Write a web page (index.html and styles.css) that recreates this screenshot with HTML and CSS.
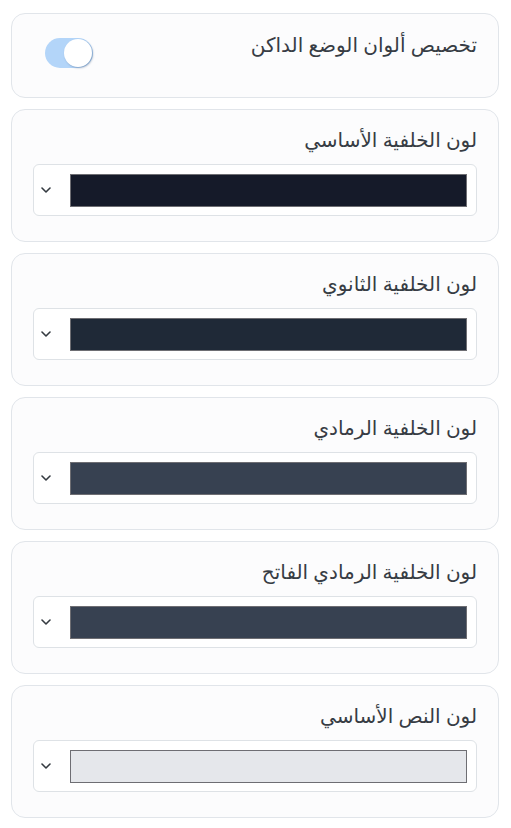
FILE: index.html
```html
<!DOCTYPE html>
<html lang="ar" dir="rtl">
<head>
<meta charset="utf-8">
<link rel="stylesheet" href="styles.css">
</head>
<body>
<div class="list">
  <div class="card card-toggle">
    <div class="toggle-label">تخصيص ألوان الوضع الداكن</div>
    <div class="switch"><div class="knob"></div></div>
  </div>
  <div class="card">
    <div class="label">لون الخلفية الأساسي</div>
    <div class="select">
      <div class="swatch" style="background:#151a29"></div>
      <svg class="chev" width="10" height="6" viewBox="0 0 10 6"><path d="M1 1l4 4 4-4" fill="none" stroke="#343a40" stroke-width="1.6" stroke-linecap="round" stroke-linejoin="round"/></svg>
    </div>
  </div>
  <div class="card">
    <div class="label">لون الخلفية الثانوي</div>
    <div class="select">
      <div class="swatch" style="background:#1f2937"></div>
      <svg class="chev" width="10" height="6" viewBox="0 0 10 6"><path d="M1 1l4 4 4-4" fill="none" stroke="#343a40" stroke-width="1.6" stroke-linecap="round" stroke-linejoin="round"/></svg>
    </div>
  </div>
  <div class="card">
    <div class="label">لون الخلفية الرمادي</div>
    <div class="select">
      <div class="swatch" style="background:#374151"></div>
      <svg class="chev" width="10" height="6" viewBox="0 0 10 6"><path d="M1 1l4 4 4-4" fill="none" stroke="#343a40" stroke-width="1.6" stroke-linecap="round" stroke-linejoin="round"/></svg>
    </div>
  </div>
  <div class="card">
    <div class="label">لون الخلفية الرمادي الفاتح</div>
    <div class="select">
      <div class="swatch" style="background:#374151"></div>
      <svg class="chev" width="10" height="6" viewBox="0 0 10 6"><path d="M1 1l4 4 4-4" fill="none" stroke="#343a40" stroke-width="1.6" stroke-linecap="round" stroke-linejoin="round"/></svg>
    </div>
  </div>
  <div class="card">
    <div class="label">لون النص الأساسي</div>
    <div class="select">
      <div class="swatch" style="background:#e5e7eb"></div>
      <svg class="chev" width="10" height="6" viewBox="0 0 10 6"><path d="M1 1l4 4 4-4" fill="none" stroke="#343a40" stroke-width="1.6" stroke-linecap="round" stroke-linejoin="round"/></svg>
    </div>
  </div>
</div>
</body>
</html>
```
FILE: styles.css
```css
html, body {
  margin: 0;
  padding: 0;
  background: #ffffff;
}
body {
  font-family: "Noto Sans", "DejaVu Sans", sans-serif;
  color: #373c44;
}
.list {
  display: flex;
  flex-direction: column;
  gap: 11px;
  padding: 13px 12px 0 11px;
}
.card {
  background: #fcfcfd;
  border: 1px solid #e1e5ea;
  border-radius: 14px;
  padding: 17px 21px 25px 21px;
  display: flex;
  flex-direction: column;
  gap: 11px;
}
.card-toggle {
  flex-direction: row;
  justify-content: space-between;
  align-items: flex-start;
  padding: 18px 21px 29px 33px;
  height: 36px;
}
.toggle-label, .label {
  font-size: 20px;
  line-height: 26px;
}
.switch {
  width: 48px;
  height: 30px;
  border-radius: 15px;
  background: #b3d5f9;
  position: relative;
  margin-top: 6px;
}
.knob {
  position: absolute;
  top: 1px;
  right: 1px;
  width: 28px;
  height: 28px;
  border-radius: 50%;
  background: #ffffff;
  box-shadow: 1px 1px 2px rgba(60, 90, 130, 0.45);
}
.select {
  height: 50px;
  border: 1px solid #dee2e6;
  border-radius: 6px;
  background: #ffffff;
  display: flex;
  align-items: center;
  padding: 0 9px 0 0;
}
.swatch {
  width: 397px;
  height: 33px;
  border: 1px solid #6e6e73;
  box-sizing: border-box;
}
.chev {
  margin-right: auto;
  margin-left: 7px;
}
```
